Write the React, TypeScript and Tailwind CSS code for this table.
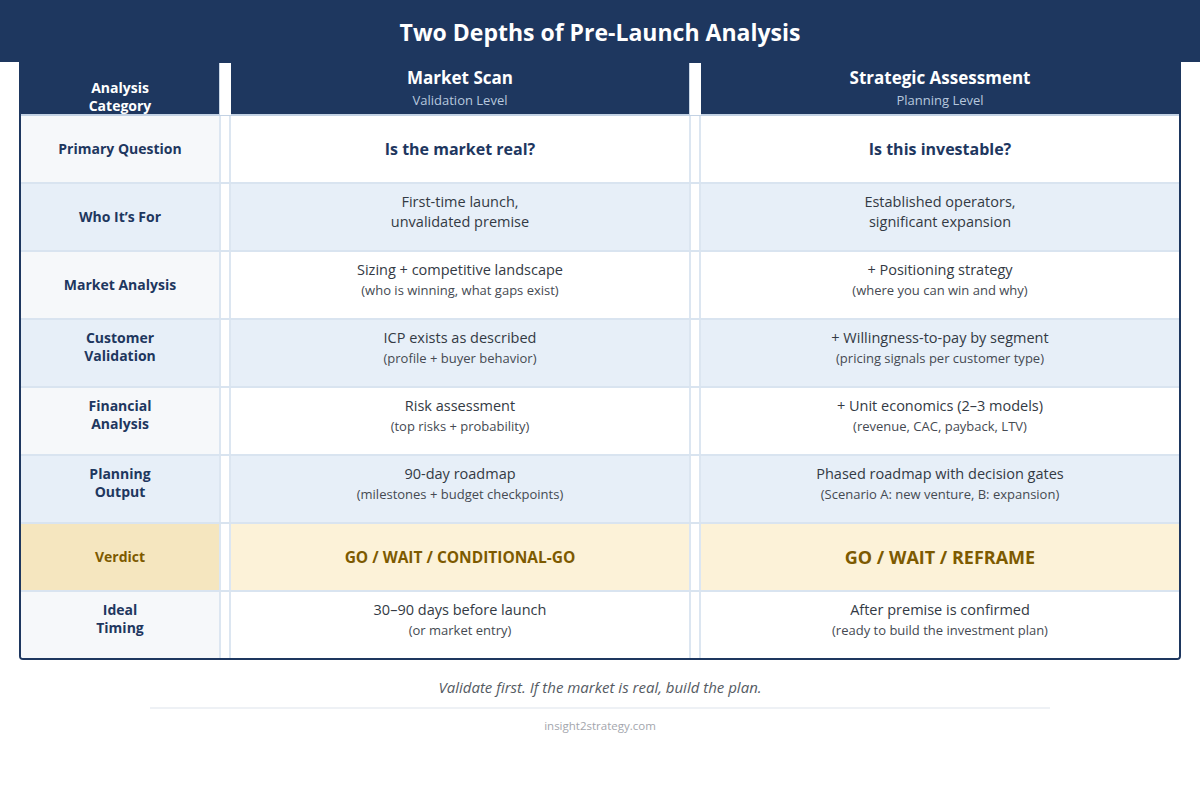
import React from "react";

type Row = {
  label: string[];
  a: string[];
  b: string[];
  kind: "question" | "two" | "main-sub" | "verdict";
  tone: "white" | "blue" | "gold";
};

const rows: Row[] = [
  { label: ["Primary Question"], a: ["Is the market real?"], b: ["Is this investable?"], kind: "question", tone: "white" },
  { label: ["Who It\u2019s For"], a: ["First-time launch,", "unvalidated premise"], b: ["Established operators,", "significant expansion"], kind: "two", tone: "blue" },
  { label: ["Market Analysis"], a: ["Sizing + competitive landscape", "(who is winning, what gaps exist)"], b: ["+ Positioning strategy", "(where you can win and why)"], kind: "main-sub", tone: "white" },
  { label: ["Customer", "Validation"], a: ["ICP exists as described", "(profile + buyer behavior)"], b: ["+ Willingness-to-pay by segment", "(pricing signals per customer type)"], kind: "main-sub", tone: "blue" },
  { label: ["Financial", "Analysis"], a: ["Risk assessment", "(top risks + probability)"], b: ["+ Unit economics (2\u20133 models)", "(revenue, CAC, payback, LTV)"], kind: "main-sub", tone: "white" },
  { label: ["Planning", "Output"], a: ["90-day roadmap", "(milestones + budget checkpoints)"], b: ["Phased roadmap with decision gates", "(Scenario A: new venture, B: expansion)"], kind: "main-sub", tone: "blue" },
  { label: ["Verdict"], a: ["GO / WAIT / CONDITIONAL-GO"], b: ["GO / WAIT / REFRAME"], kind: "verdict", tone: "gold" },
  { label: ["Ideal", "Timing"], a: ["30\u201390 days before launch", "(or market entry)"], b: ["After premise is confirmed", "(ready to build the investment plan)"], kind: "main-sub", tone: "white" },
];

function DataCell({ row, lines, big, bg }: { row: Row; lines: string[]; big: boolean; bg: string }) {
  if (row.kind === "question") {
    return (
      <div className={`flex items-center justify-center ${bg}`}>
        <span className="text-[16px] font-bold text-[#1e375f] leading-[22px]">{lines[0]}</span>
      </div>
    );
  }
  if (row.kind === "verdict") {
    return (
      <div className={`flex items-center justify-center ${bg}`}>
        <span className={`font-bold text-[#7d5a00] ${big ? "text-[18px] leading-[24px]" : "text-[15.5px] leading-[20px]"}`}>
          {lines[0]}
        </span>
      </div>
    );
  }
  if (row.kind === "two") {
    return (
      <div className={`flex flex-col items-center justify-center pb-[10px] ${bg}`}>
        <span className="text-[14.5px] leading-[20px] text-[#333a44]">{lines[0]}</span>
        <span className="text-[14.5px] leading-[20px] text-[#333a44]">{lines[1]}</span>
      </div>
    );
  }
  return (
    <div className={`flex flex-col items-center justify-center pb-[10px] ${bg}`}>
      <span className="text-[14.5px] leading-[20px] text-[#333a44]">{lines[0]}</span>
      <span className="text-[13px] leading-[20px] text-[#454a52]">{lines[1]}</span>
    </div>
  );
}

export default function App() {
  return (
    <div
      className="w-[1200px] h-[800px] bg-white flex flex-col"
      style={{ fontFamily: '"Open Sans", "Noto Sans", Arial, sans-serif' }}
    >
      <div className="h-[62px] bg-[#1e375f] flex items-center justify-center">
        <h1 className="text-white font-bold text-[23px] leading-[30px] mt-[2px]">Two Depths of Pre-Launch Analysis</h1>
      </div>

      <div className="mx-[19px] border-x-2 border-b-2 border-[#1e375f] rounded-b-[4px] overflow-hidden">
        {/* header */}
        <div className="grid grid-cols-[198px_12px_458px_12px_478px] h-[54px] bg-[#1e375f] pt-[1px] border-b-2 border-[#c3d2e4]">
          <div className="flex flex-col items-center justify-start pt-[16px]">
            <span className="text-white font-bold text-[14px] leading-[18px]">Analysis</span>
            <span className="text-white font-bold text-[14px] leading-[18px]">Category</span>
          </div>
          <div className="bg-white border-l border-[#c9d6e6]" />
          <div className="flex flex-col items-center justify-start pt-[4px]">
            <span className="text-white font-bold text-[17px] leading-[22px]">Market Scan</span>
            <span className="text-[#b7c8de] text-[13px] leading-[22px]">Validation Level</span>
          </div>
          <div className="bg-white border-l border-[#c9d6e6]" />
          <div className="flex flex-col items-center justify-start pt-[4px]">
            <span className="text-white font-bold text-[17px] leading-[22px]">Strategic Assessment</span>
            <span className="text-[#b7c8de] text-[13px] leading-[22px]">Planning Level</span>
          </div>
        </div>

        {rows.map((row, i) => {
          const last = i === rows.length - 1;
          const labelBg =
            row.tone === "gold" ? "bg-[#f5e6bf]" : row.tone === "blue" ? "bg-[#e7eff8]" : "bg-[#f6f8fa]";
          const dataBg =
            row.tone === "gold" ? "bg-[#fcf2d8]" : row.tone === "blue" ? "bg-[#e7eff8]" : "bg-white";
          const twoLine = row.label.length > 1;
          return (
            <div
              key={i}
              className={`grid grid-cols-[198px_12px_458px_12px_478px] ${last ? "h-[66px]" : "h-[68px] border-b-2 border-[#d9e4f0]"}`}
            >
              <div className={`flex flex-col items-center justify-center ${twoLine ? "pb-[12px]" : ""} ${labelBg}`}>
                {row.label.map((l) => (
                  <span
                    key={l}
                    className={`font-bold text-[14px] leading-[18px] ${row.tone === "gold" ? "text-[#7d5a00]" : "text-[#1e375f]"}`}
                  >
                    {l}
                  </span>
                ))}
              </div>
              <div className="bg-white border-x-2 border-[#dce6f1]" />
              <DataCell row={row} lines={row.a} big={false} bg={dataBg} />
              <div className="bg-white border-x-2 border-[#dce6f1]" />
              <DataCell row={row} lines={row.b} big={true} bg={dataBg} />
            </div>
          );
        })}
      </div>

      <p className="mt-[17px] text-center italic text-[15px] leading-[20px] text-[#555b63]">
        Validate first. If the market is real, build the plan.
      </p>
      <div className="mx-auto mt-[10px] w-[900px] h-[2px] bg-[#eef1f5]" />
      <p className="mt-[9px] text-center text-[11.5px] leading-[16px] text-[#a3a6ad]">insight2strategy.com</p>
    </div>
  );
}
